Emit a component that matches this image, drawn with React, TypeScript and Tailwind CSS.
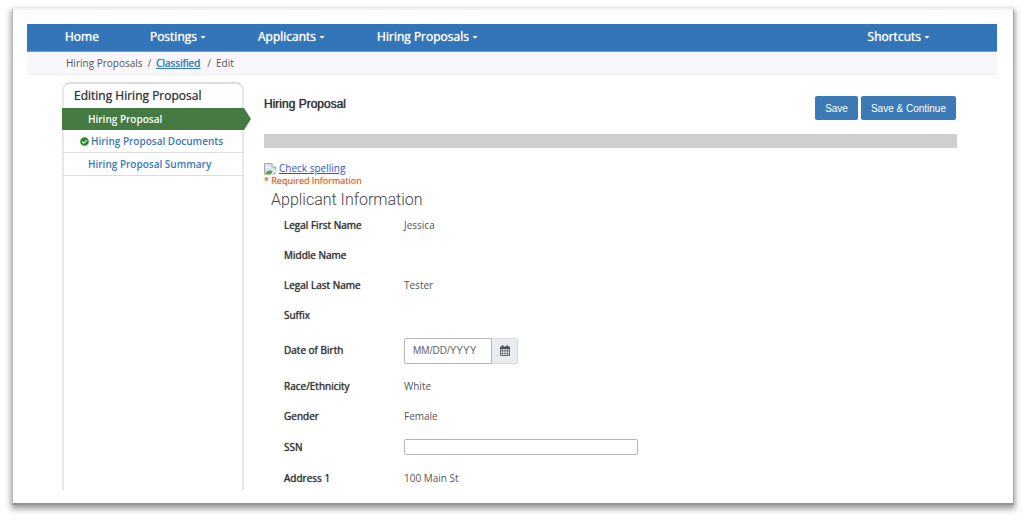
import React from "react";
import { FaCheckCircle, FaCaretDown } from "react-icons/fa";

const fields = [
  { label: "Legal First Name", value: "Jessica" },
  { label: "Middle Name", value: "" },
  { label: "Legal Last Name", value: "Tester" },
  { label: "Suffix", value: "" },
  { label: "Date of Birth", kind: "date" },
  { label: "Race/Ethnicity", value: "White" },
  { label: "Gender", value: "Female" },
  { label: "SSN", kind: "text" },
  { label: "Address 1", value: "100 Main St" },
];

function NavItem({ label, menu = true }: { label: string; menu?: boolean }) {
  return (
    <a href="#" className="flex items-center gap-[2px] whitespace-nowrap">
      {label}
      {menu && <FaCaretDown className="size-2" aria-hidden="true" />}
    </a>
  );
}

function CalendarIcon() {
  return (
    <svg viewBox="0 0 10 11" className="h-[11px] w-[10px]" aria-hidden="true">
      <path
        fill="#4a4f59"
        fillRule="evenodd"
        d="M1 1.5h1V.8c0-.5.3-.8.7-.8s.8.3.8.8v.7h3V.8c0-.5.3-.8.8-.8s.7.3.7.8v.7h1c.6 0 1 .4 1 1V10c0 .6-.4 1-1 1H1c-.6 0-1-.4-1-1V2.500c0-.6.4-1 1-1zM.8 4v1.600h1.600V4zm2.200 0v1.600h1.700V4zm2.300 0v1.600H7V4zm2.300 0v1.600h1.600V4zM.8 6.200v1.700h1.600V6.200zm2.200 0v1.700h1.700V6.200zm2.300 0v1.700H7V6.200zm2.300 0v1.700h1.600V6.200zM.8 8.500v1.700h1.600V8.500zm2.200 0v1.700h1.700V8.500zm2.300 0v1.700H7V8.500zm2.300 0v1.700h1.600V8.500z"
      />
    </svg>
  );
}

function BrokenImageIcon() {
  return (
    <svg viewBox="0 0 12 12" className="mt-[2px] size-3 shrink-0" aria-hidden="true">
      <path d="M.5 11.500V.5h7.500l3.500 3.500v3" fill="#d9e4f3" stroke="#a5a9b0" />
      <path d="M8 .5V4h3.500" fill="#fff" stroke="#a5a9b0" />
      <path d="M1 11.500C2 8.500 4 7.300 6.500 7.500L9 8.500 6.500 11.500z" fill="#55a344" />
      <path d="M2 4.500c.5-1.500 2-1.500 2.500-.5 1 0 1.500.5 1.500 1H2z" fill="#fff" />
      <path d="M8 11.500h3.500V8z" fill="#aeb3bc" />
    </svg>
  );
}

export default function App() {
  return (
    <div className="bg-white pt-2 pr-[10px] pb-4 pl-3 font-['Open_Sans',sans-serif] text-[10px] text-[#555]">
      <div className="border border-t-2 border-[#f1f1f1] border-r-[#a6a6a6] border-b-2 border-b-[#929292] border-l-[#bbb] bg-white pt-[14px] pr-4 pb-[13px] pl-[14px] shadow-[0_3px_6px_1px_rgba(0,0,0,0.4)]">
        <nav className="flex h-7 items-center justify-between border-b border-[#6c9dcc] bg-[#3276b9] pr-[66px] pb-[2px] pl-[38px] text-[12px] text-white [text-shadow:0_0_1px_currentColor]">
          <div className="flex gap-[51px]">
            <NavItem label="Home" menu={false} />
            <NavItem label="Postings" />
            <NavItem label="Applicants" />
            <NavItem label="Hiring Proposals" />
          </div>
          <NavItem label="Shortcuts" />
        </nav>
        <div className="flex h-[23px] items-center gap-[5px] border-b border-[#eee] bg-[#f9f7fb] pl-[39px] text-[10px] text-[#555]">
          <span>Hiring Proposals</span>
          <span>/</span>
          <a
            href="#"
            className="text-[#3377b5] underline [text-shadow:0_0_1px_currentColor]"
          >
            Classified
          </a>
          <span className="pl-[2px]">/</span>
          <span>Edit</span>
        </div>

        <div className="flex h-[415px] gap-5 overflow-hidden pt-[7px] pr-10 pl-[35px]">
          <aside className="w-[182px] shrink-0 rounded-t-lg border-2 border-b-0 border-[#e8e8e8] border-t-[#dcdcdc]">
            <h2 className="pl-[10px] text-[12px] leading-6 text-[#333] [text-shadow:0_0_1px_#777]">
              Editing Hiring Proposal
            </h2>
            <div className="-mx-[2px] text-[10px] font-semibold">
              <a
                href="#"
                className="-mr-[7px] flex h-[22px] items-center bg-[#457b43] pl-[26px] text-white [clip-path:polygon(0_0,calc(100%-7px)_0,100%_50%,calc(100%-7px)_100%,0_100%)]"
              >
                Hiring Proposal
              </a>
              <a
                href="#"
                className="flex h-[23px] items-center gap-[2px] border-b border-[#ddd] pl-[18px] text-[#3a79b7]"
              >
                <FaCheckCircle className="size-[9px] text-[#238a23]" aria-hidden="true" />
                Hiring Proposal Documents
              </a>
              <a
                href="#"
                className="flex h-[23px] items-center border-b border-[#ddd] pl-[26px] text-[#3a79b7]"
              >
                Hiring Proposal Summary
              </a>
            </div>
          </aside>

          <main className="min-w-0 flex-1">
            <div className="flex h-[52px] items-start justify-between">
              <h1 className="pt-3 font-['Liberation_Sans',sans-serif] text-[12px] leading-5 text-[#333] [text-shadow:0_0_1px_currentColor]">
                Hiring Proposal
              </h1>
              <div className="flex gap-[3px] pt-[14px] pr-px font-['Liberation_Sans',sans-serif] text-[10px] text-white [text-shadow:0_0_1px_#fff,0_0_1px_#fff]">
                <button className="h-6 rounded-xs bg-[#3c7ab6] px-[10px]">Save</button>
                <button className="h-6 rounded-xs bg-[#3c7ab6] px-[10px]">Save &amp; Continue</button>
              </div>
            </div>
            <div className="h-[14px] bg-[#cfcfcf]" />
            <div className="mt-3 flex h-[15px] items-center gap-[3px]">
              <BrokenImageIcon />
              <a href="#" className="text-[10px] leading-[14px] text-[#3553c4] underline">
                Check spelling
              </a>
            </div>
            <p className="text-[9px] leading-3 text-[#dd5f27] [text-shadow:0_0_1px_#e9976f]">
              * Required Information
            </p>
            <h2 className="h-[23px] pl-[7px] font-[Roboto,sans-serif] text-[16px] leading-[26px] font-light text-[#444]">
              Applicant Information
            </h2>
            <dl className="pl-5">
              {fields.map((f) => (
                <div
                  key={f.label}
                  className={
                    f.kind === "date"
                      ? "flex h-[41px] items-center"
                      : f.kind === "text"
                        ? "flex h-8 items-center"
                        : "flex h-[30px] items-center"
                  }
                >
                  <dt className="w-[120px] shrink-0 text-[#333] [text-shadow:0_0_1px_currentColor]">
                    {f.kind ? <label htmlFor={f.kind}>{f.label}</label> : f.label}
                  </dt>
                  <dd className="min-w-0 flex-1">
                    {f.kind === "date" ? (
                      <div className="flex">
                        <input
                          id="date"
                          placeholder="MM/DD/YYYY"
                          className="h-[26px] w-[88px] rounded-l-xs border border-[#b3b7bb] pl-2 font-['Liberation_Sans',sans-serif] text-[10px] placeholder:text-[#666]"
                        />
                        <button
                          aria-label="Choose date"
                          className="flex h-[26px] w-[26px] items-center justify-center rounded-r-xs border border-l-0 border-[#d4d9df] bg-[#e9edf2]"
                        >
                          <CalendarIcon />
                        </button>
                      </div>
                    ) : f.kind === "text" ? (
                      <input
                        id="text"
                        className="block h-4 w-full max-w-[234px] rounded-xs border border-[#b5b5b5] px-1"
                      />
                    ) : (
                      f.value
                    )}
                  </dd>
                </div>
              ))}
            </dl>
          </main>
        </div>
      </div>
    </div>
  );
}
